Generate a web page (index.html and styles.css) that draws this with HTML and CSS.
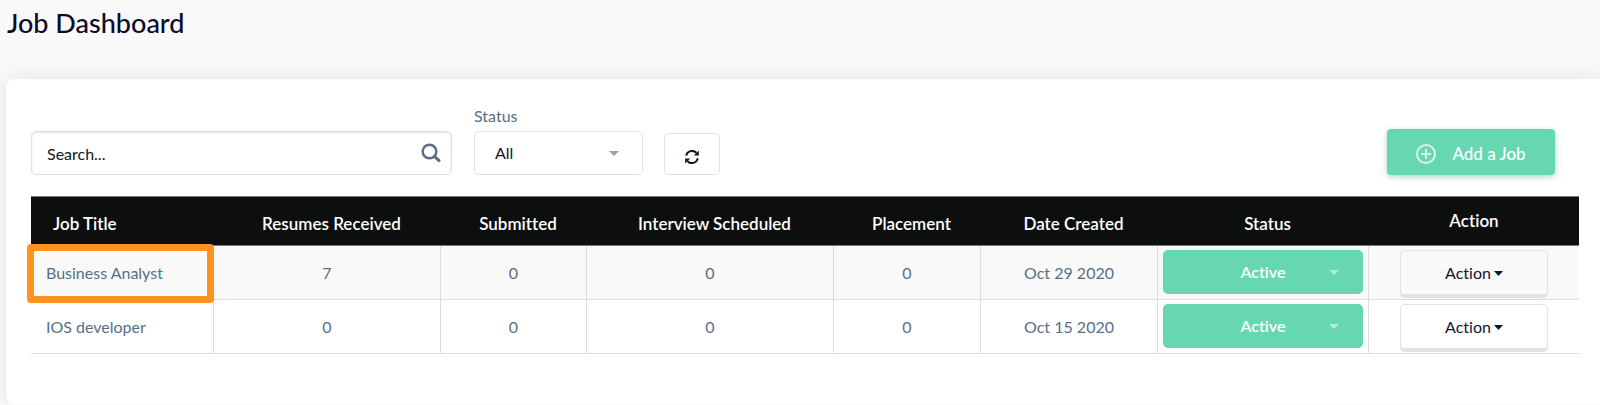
FILE: index.html
```html
<!DOCTYPE html>
<html lang="en">
<head>
<meta charset="utf-8">
<title>Job Dashboard</title>
<meta name="viewport" content="width=device-width, initial-scale=1">
<link rel="stylesheet" href="styles.css">
</head>
<body>
<h1 class="page-title">Job Dashboard</h1>
<main class="card">
  <form class="toolbar">
    <div class="search">
      <input class="search-input" type="text" placeholder="Search..." aria-label="Search">
      <svg class="search-icon" width="20" height="20" viewBox="0 0 20 20" aria-hidden="true"><circle cx="8.5" cy="8.5" r="6.8" fill="none" stroke="#5f6b88" stroke-width="2.5"/><path d="M13.4 13.4 18 17.6" stroke="#5f6b88" stroke-width="3" stroke-linecap="round"/></svg>
    </div>
    <div class="field">
      <label class="field-label" for="status">Status</label>
      <div class="select-wrap">
        <select class="select" id="status"><option>All</option></select>
        <svg class="caret" width="10" height="5" viewBox="0 0 10 5" aria-hidden="true"><path d="M0 0h10L5 5z"/></svg>
      </div>
    </div>
    <button class="refresh" type="button" aria-label="Refresh">
      <svg width="14" height="14" viewBox="0 0 14 14" aria-hidden="true"><path d="M1.2 5.6A6 6 0 0 1 11.4 2.8M12.8 8.4A6 6 0 0 1 2.6 11.2" fill="none" stroke="#101828" stroke-width="2"/><path d="M13.8 .4v5H8.8zM.2 13.6v-5h5z" fill="#101828"/></svg>
    </button>
    <button class="add-job" type="button">
      <svg width="20" height="20" viewBox="0 0 20 20" aria-hidden="true"><circle cx="10" cy="10" r="9" fill="none" stroke="#d8f6eb" stroke-width="2"/><path d="M10 5v10M5 10h10" stroke="#d8f6eb" stroke-width="2"/></svg>
      Add a Job
    </button>
  </form>
  <table class="jobs">
    <colgroup>
      <col class="c-title"><col class="c-resumes"><col class="c-submitted"><col class="c-interview"><col class="c-placement"><col class="c-date"><col class="c-status"><col class="c-action">
    </colgroup>
    <thead>
      <tr><th class="title">Job Title</th><th>Resumes Received</th><th>Submitted</th><th>Interview Scheduled</th><th>Placement</th><th>Date Created</th><th>Status</th><th class="plain">Action</th></tr>
    </thead>
    <tbody>
      <tr>
        <td class="title highlighted"><a class="job-link" href="#">Business Analyst</a></td><td>7</td><td>0</td><td>0</td><td>0</td><td>Oct 29 2020</td>
        <td class="control"><div class="select-wrap"><select class="select active" aria-label="Status of Business Analyst"><option>Active</option></select><svg class="caret light" width="10" height="5" viewBox="0 0 10 5" aria-hidden="true"><path d="M0 0h10L5 5z"/></svg></div></td>
        <td class="control"><button class="action" type="button">Action<svg width="9" height="5" viewBox="0 0 9 5" aria-hidden="true"><path d="M0 0h9L4.500 5z"/></svg></button></td>
      </tr>
      <tr>
        <td class="title"><a class="job-link" href="#">IOS developer</a></td><td>0</td><td>0</td><td>0</td><td>0</td><td>Oct 15 2020</td>
        <td class="control"><div class="select-wrap"><select class="select active" aria-label="Status of IOS developer"><option>Active</option></select><svg class="caret light" width="10" height="5" viewBox="0 0 10 5" aria-hidden="true"><path d="M0 0h10L5 5z"/></svg></div></td>
        <td class="control"><button class="action" type="button">Action<svg width="9" height="5" viewBox="0 0 9 5" aria-hidden="true"><path d="M0 0h9L4.500 5z"/></svg></button></td>
      </tr>
    </tbody>
  </table>
</main>
</body>
</html>
```
FILE: styles.css
```css
* { box-sizing: border-box; }
body {
  margin: 0;
  background: #f9f9f9;
  color: #101828;
  font: 16px/20px Lato, "Liberation Sans", sans-serif;
  font-variant-ligatures: none;
  overflow-x: hidden;
}
input, select, button { font: inherit; font-variant-ligatures: none; color: #101828; }
.page-title {
  margin: 0;
  padding: 7px 7px 40px;
  font-size: 27px;
  line-height: 32px;
  font-weight: 500;
  color: #0b0b2b;
}
.card {
  margin-left: 6px;
  padding: 27px 21px 50px 25px;
  background: #fff;
  border-radius: 8px 0 0 8px;
  box-shadow: 0 0 20px rgba(0, 0, 0, .09);
}
.toolbar { display: flex; align-items: flex-end; margin-bottom: 21px; }
.search, .select-wrap { display: grid; align-items: center; }
.search > *, .select-wrap > * { grid-area: 1 / 1; }
.search { width: 421px; margin-right: 22px; }
.search-input {
  width: 100%;
  height: 44px;
  padding: 0 48px 0 15px;
  border: 1px solid #dfdfdf;
  border-radius: 5px;
  background: #fff;
  box-shadow: inset 0 1px 2px rgba(0, 0, 0, .1);
}
.search-input::placeholder { color: #101828; opacity: 1; }
.search-icon { justify-self: end; margin-right: 11px; }
.field { width: 169px; margin-right: 21px; }
.field-label { display: block; margin-bottom: 5px; color: #567085; }
.select {
  appearance: none;
  width: 100%;
  height: 44px;
  padding: 0 40px 0 20px;
  border: 1px solid #e2e2e2;
  border-radius: 5px;
  background: #fff;
}
.caret { justify-self: end; margin-right: 24px; fill: #999ea6; pointer-events: none; }
.caret.light { fill: #b5ecd8; }
.select.active {
  padding: 0 20px;
  border: 0;
  background: #67d7b2;
  color: #fff;
  font-weight: 600;
  text-align-last: center;
}
.refresh {
  display: grid;
  place-items: center;
  width: 56px;
  height: 42px;
  padding: 5px 0 0;
  border: 1px solid #e2e2e2;
  border-radius: 5px;
  background: #fff;
}
.add-job {
  display: flex;
  align-items: center;
  justify-content: center;
  gap: 16px;
  width: 168px;
  height: 46px;
  padding: 3px 0 0;
  margin: 0 24px 0 auto;
  border: 0;
  border-radius: 4px;
  background: #67d7b2;
  box-shadow: 0 2px 6px rgba(50, 160, 120, .4);
  color: #fff;
  font-size: 17px;
  font-weight: 500;
}
.jobs {
  width: 100%;
  table-layout: fixed;
  border-spacing: 0;
  text-align: center;
  color: #567085;
}
.c-title { width: 183px; }
.c-resumes { width: 227px; }
.c-submitted { width: 146px; }
.c-interview { width: 247px; }
.c-placement { width: 147px; }
.c-date { width: 177px; }
.c-status { width: 211px; }
.c-action { width: 210px; }
.jobs th {
  height: 50px;
  padding: 5px 0 0 8px;
  border: solid #777;
  border-width: 1px 0;
  background: #0d0f0e;
  color: #fff;
  font-size: 17px;
  font-weight: 600;
}
.jobs th.title { padding-left: 22px; text-align: left; }
.jobs th.plain { padding: 0; }
.jobs td {
  height: 54px;
  padding: 0;
  border: solid #dcdcdc;
  border-width: 0 1px 1px 0;
}
.jobs td:last-child { border-right: 0; }
.jobs tbody tr:nth-child(odd) { background: #f9f9f9; }
.jobs td.title { padding-left: 15px; text-align: left; }
.jobs td.control { padding: 4px 5px 0; vertical-align: top; }
.job-link { color: inherit; text-decoration: none; }
.highlighted { position: relative; }
.highlighted::after {
  content: "";
  position: absolute;
  inset: -2px -1px -4px -4px;
  border: 7px solid #ff931e;
  border-radius: 4px;
  pointer-events: none;
}
.action {
  width: 148px;
  height: 48px;
  padding: 0;
  border: 1px solid #e2e2e2;
  border-bottom-width: 4px;
  border-radius: 5px;
  background: transparent;
}
.action svg { margin-left: 3px; vertical-align: 3px; fill: #101828; }
```
